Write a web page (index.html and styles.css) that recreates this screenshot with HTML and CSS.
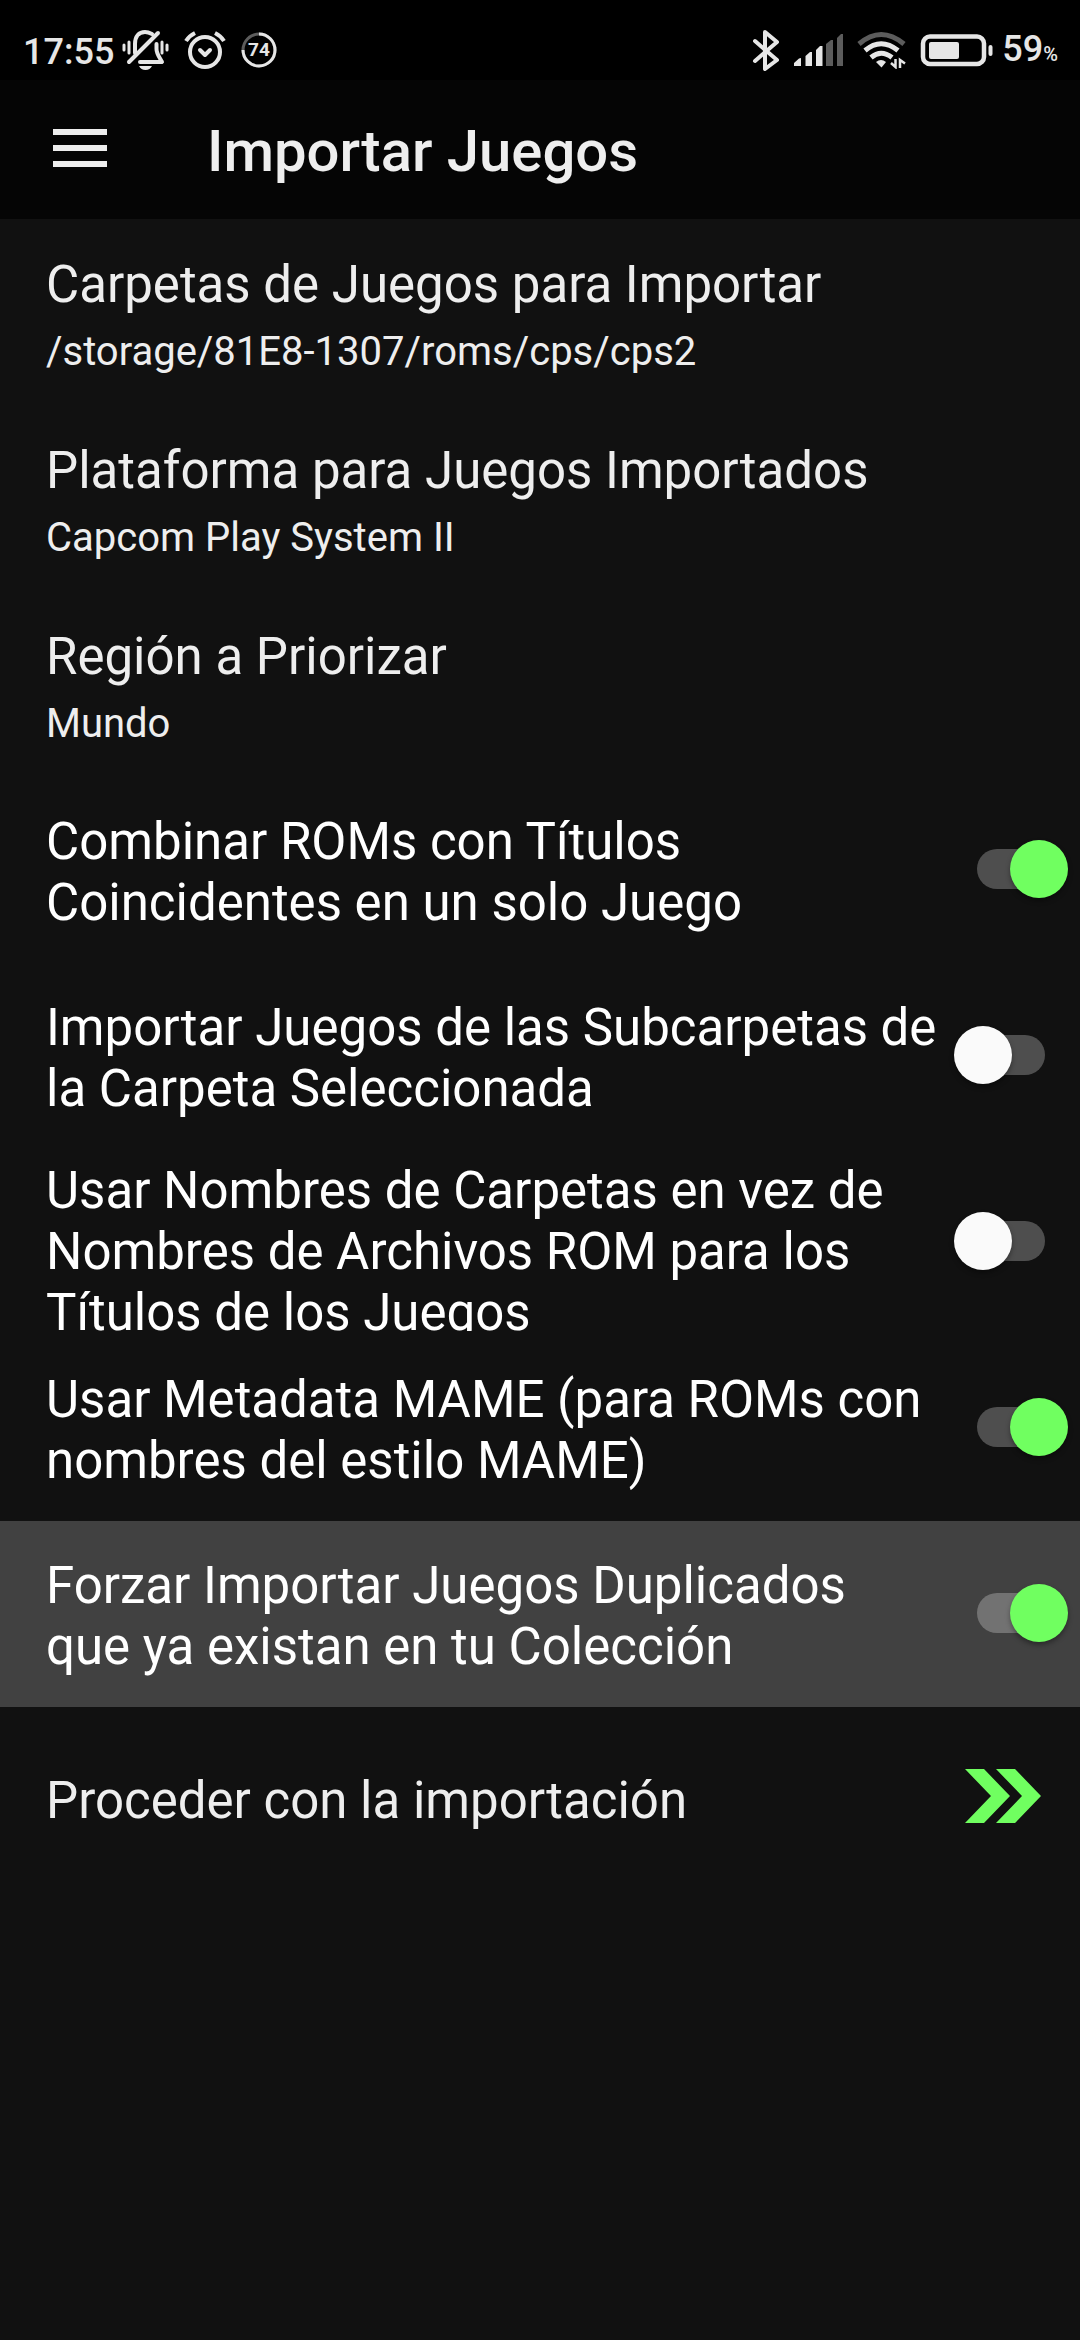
FILE: index.html
```html
<!DOCTYPE html>
<html lang="es">
<head>
<meta charset="utf-8">
<meta name="viewport" content="width=device-width, initial-scale=1">
<title>Importar Juegos</title>
<link rel="stylesheet" href="styles.css">
</head>
<body>
<div class="status">
  <div class="status-side">
    <span class="clock">17:55</span>
    <svg class="bell" width="48" height="42" viewBox="120 29 48 42" fill="none" stroke="currentColor" stroke-width="4" stroke-linecap="round" aria-hidden="true">
      <path d="M134 53V44C134 36 138 32 144 32C147 32 149 33 151 34M155.500 44V49C155.500 54 159 58 161 62H139" stroke-linejoin="round"/>
      <path d="M128 62L157 33"/>
      <path d="M138 66H151Q149 70 144.500 70Q140 70 138 66Z" fill="currentColor" stroke="none"/>
      <path stroke-width="3" d="M123 45V50M128 42V53M161 42V53M166 45V50"/>
    </svg>
    <svg class="alarm" width="42" height="40" viewBox="183 29 42 40" fill="none" stroke="currentColor" stroke-linecap="round" aria-hidden="true">
      <circle cx="204" cy="51" r="15" stroke-width="4"/>
      <path stroke-width="4" stroke-linejoin="round" d="M199 49L204 54L209 49"/>
      <path stroke-width="4" stroke-linecap="butt" d="M185 40Q188 35 194 32M214 32Q220 35 223 40"/>
    </svg>
    <svg class="ring" width="36" height="36" viewBox="240 32 36 36" fill="none" stroke="currentColor" stroke-width="3" aria-hidden="true">
      <circle cx="258" cy="50" r="16" opacity=".4"/>
      <path d="M258 34A16 16 0 1 1 242 50"/>
      <text x="258" y="56" text-anchor="middle" class="ring-text">74</text>
    </svg>
  </div>
  <div class="status-side">
    <svg class="bt" width="28" height="42" viewBox="752 28 28 42" fill="none" stroke="currentColor" stroke-width="4" stroke-linecap="round" stroke-linejoin="round" aria-hidden="true">
      <path d="M755 40L777 59L765 68V31L777 41L755 60"/>
    </svg>
    <svg class="signal" width="50" height="34" viewBox="793 33 50 34" fill="currentColor" aria-hidden="true">
      <path d="M794 66V63L799 58.500L801 58V66ZM805.500 66V56L810 52L812 52V66ZM816 66V50L820 46L822.500 46V66Z"/>
      <path opacity=".4" d="M826 66V44L831 40L833 40V66ZM837 66V38L841 34L843 34V66Z"/>
    </svg>
    <svg class="wifi" width="50" height="38" viewBox="857 31 50 38" fill="none" stroke="currentColor" stroke-width="5" aria-hidden="true">
      <path opacity=".4" d="M859 44Q881 25 904 44"/>
      <path d="M865 50.500Q881 37 898 50.500M871 57.500Q881 49 892 57.500"/>
      <path stroke="none" fill="currentColor" d="M876 62Q881 58 886 62L881.500 67.500Z"/>
      <path stroke-width="2.500" d="M895.500 59V67L891 63M900 68V60L905 63.500"/>
    </svg>
    <svg class="battery" width="73" height="34" viewBox="920 32 73 34" fill="currentColor" aria-hidden="true">
      <rect x="923" y="35.500" width="61" height="27.500" rx="7" fill="none" stroke="currentColor" stroke-width="4.500"/>
      <rect x="929" y="41" width="30" height="17" rx="2"/>
      <rect x="988.500" y="44" width="4" height="11" rx="2"/>
    </svg>
    <span class="level">59<span class="percent">%</span></span>
  </div>
</div>
<header class="bar">
  <button class="menu" type="button" aria-label="Menú"><span class="menu-line"></span><span class="menu-line"></span><span class="menu-line"></span></button>
  <h1 class="heading">Importar Juegos</h1>
</header>
<main class="list">
  <button class="row entry" type="button"><span class="title">Carpetas de Juegos para Importar</span><span class="summary">/storage/81E8-1307/roms/cps/cps2</span></button>
  <button class="row entry" type="button"><span class="title">Plataforma para Juegos Importados</span><span class="summary">Capcom Play System II</span></button>
  <button class="row entry" type="button"><span class="title">Región a Priorizar</span><span class="summary">Mundo</span></button>
  <label class="row option"><span class="label">Combinar ROMs con Títulos Coincidentes en un solo Juego</span><input class="switch" type="checkbox" role="switch" checked></label>
  <label class="row option"><span class="label">Importar Juegos de las Subcarpetas de la Carpeta Seleccionada</span><input class="switch" type="checkbox" role="switch"></label>
  <label class="row option"><span class="label">Usar Nombres de Carpetas en vez de Nombres de Archivos ROM para los Títulos de los Juegos</span><input class="switch" type="checkbox" role="switch"></label>
  <label class="row option"><span class="label">Usar Metadata MAME (para ROMs con nombres del estilo MAME)</span><input class="switch" type="checkbox" role="switch" checked></label>
  <label class="row option active"><span class="label">Forzar Importar Juegos Duplicados que ya existan en tu Colección</span><input class="switch" type="checkbox" role="switch" checked></label>
  <button class="row action" type="button"><span class="title">Proceder con la importación</span>
    <svg class="forward" width="76" height="54" viewBox="0 0 76 54" aria-hidden="true"><path fill="currentColor" d="M0 0H19L45 27L19 54H0L26 27ZM31 0H50L76 27L50 54H31L57 27Z"/></svg>
  </button>
</main>
</body>
</html>
```

FILE: styles.css
```css
* { box-sizing: border-box; }

body {
  margin: 0;
  min-height: 100vh;
  background: #111;
  color: #eee;
  font-family: Roboto, "Noto Sans", sans-serif;
}

button {
  border: 0;
  background: none;
  color: inherit;
  font: inherit;
  text-align: left;
}

svg { display: block; flex: none; }

/* Status bar */
.status {
  display: flex;
  justify-content: space-between;
  height: 80px;
  padding: 20px 22px 0 23px;
  background: #000;
  color: #e6e6e6;
}

.status-side { display: flex; align-items: center; height: 60px; }
.clock, .level { padding-top: 3px; font-size: 36px; line-height: 42px; font-weight: 500; }
.level { margin-left: 9px; }
.percent { font-size: 20px; }
.bell { margin-left: 7px; }
.alarm { margin-left: 15px; }
.ring { margin-left: 15px; }
.ring-text { fill: currentColor; stroke: none; font-size: 19px; font-weight: 700; }
.signal { margin-left: 13px; }
.wifi { margin-left: 14px; }
.battery { margin-left: 13px; }

/* Title bar */
.bar {
  display: flex;
  align-items: center;
  gap: 100px;
  height: 139px;
  padding: 2px 53px 0;
  background: #050505;
}

.menu { display: grid; gap: 10px; width: 54px; margin: 0 0 6px; padding: 0; }
.menu-line { height: 6px; background: #eee; }
.heading { margin: 0; font-size: 58px; line-height: 68px; font-weight: 500; }

/* Preference list */
.row {
  display: flex;
  width: 100%;
  height: 186px;
  padding: 4px 12px 4px 46px;
}

.title, .label { font-size: 51px; line-height: 61px; }
.summary { font-size: 40px; line-height: 47px; }

.entry {
  flex-direction: column;
  justify-content: center;
  gap: 13px;
  padding-top: 8px;
}

.option { align-items: center; gap: 14px; color: #fff; }

.label {
  flex: 1;
  max-height: 100%;
  padding: 7px 0 3px;
  overflow: hidden;
}

.active { background: #414141; }

.switch {
  appearance: none;
  display: grid;
  align-items: center;
  flex: none;
  width: 114px;
  height: 60px;
  margin: 0 0 2px;
}

.switch::before, .switch::after { content: ""; grid-area: 1 / 1; }

.switch::before {
  justify-self: center;
  width: 68px;
  height: 40px;
  border-radius: 20px;
  background: rgba(255, 255, 255, 0.26);
}

.switch::after {
  width: 58px;
  height: 58px;
  border-radius: 50%;
  background: #fafafa;
  box-shadow: 0 3px 5px rgba(0, 0, 0, 0.35);
}

.switch:checked::after { justify-self: end; background: #70ff60; }

.action { align-items: center; justify-content: space-between; padding-right: 39px; }
.forward { margin-bottom: 9px; color: #70ff60; }
```
